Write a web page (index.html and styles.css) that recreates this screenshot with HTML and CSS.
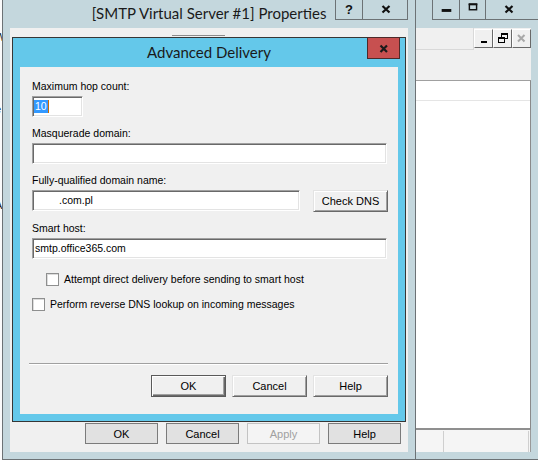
FILE: index.html
```html
<!DOCTYPE html>
<html>
<head>
<meta charset="utf-8">
<title>Advanced Delivery</title>
<link rel="stylesheet" href="styles.css">
</head>
<body>
<div class="desk">
  <div class="bgwin">
    <span class="frag f1">W</span>
    <span class="frag f2">r</span>
    <span class="frag f3">e</span>
    <span class="frag f4">r</span>
    <span class="frag f5">t</span>
    <span class="frag f6">A</span>
  </div>

  <div class="win mmc">
    <div class="titlebar mmc-title">
      <div class="capbtns">
        <span class="cb cb-min">
          <svg width="27" height="19" viewBox="0 0 27 19"><rect x="9" y="9" width="10" height="3" fill="#111"/></svg>
        </span>
        <span class="cb cb-max">
          <svg width="26" height="19" viewBox="0 0 26 19"><rect x="9.75" y="4.25" width="7.5" height="5.5" fill="none" stroke="#111" stroke-width="1.5"/><rect x="9" y="3" width="9" height="2" fill="#111"/></svg>
        </span>
        <span class="cb cb-close">
          <svg width="52" height="19" viewBox="0 0 52 19"><path d="M19.5 6 L26.5 12.5 M26.5 6 L19.5 12.5" stroke="#111" stroke-width="2.2" fill="none"/></svg>
        </span>
      </div>
    </div>
    <div class="client mmc-client">
      <div class="menubar">
        <div class="menu-fill"></div>
        <div class="mdibtns">
          <span class="mdib"><svg width="17" height="17" viewBox="0 0 17 17"><rect x="6" y="11" width="6" height="2" fill="#000"/></svg></span>
          <span class="mdib"><svg width="17" height="17" viewBox="0 0 17 17"><rect x="7.5" y="3.5" width="6" height="5" fill="none" stroke="#000"/><rect x="7" y="3" width="7" height="2" fill="#000"/><rect x="4.5" y="7.5" width="6" height="5" fill="#f0f0f0" stroke="#000"/><rect x="4" y="7" width="7" height="2" fill="#000"/></svg></span>
          <span class="mdib mdib-off"><svg width="17" height="17" viewBox="0 0 17 17"><path d="M5 5 L11.5 11.5 M11.5 5 L5 11.5" stroke="#a8a8a8" stroke-width="2" fill="none"/></svg></span>
        </div>
      </div>
      <div class="toolbar"></div>
      <div class="list">
        <div class="list-head"></div>
      </div>
      <div class="status">
        <span class="st st1"></span>
        <span class="st st2"></span>
      </div>
    </div>
  </div>

  <div class="win props">
    <div class="titlebar props-title">
      <span></span>
      <span class="title-text props-title-text">[SMTP Virtual Server #1] Properties</span>
      <div class="capbtns">
        <span class="cb cb-help">?</span>
        <span class="cb cb-pclose">
          <svg width="44" height="19" viewBox="0 0 44 19"><path d="M19.5 6 L26.5 12.5 M26.5 6 L19.5 12.5" stroke="#111" stroke-width="2.2" fill="none"/></svg>
        </span>
      </div>
    </div>
    <div class="client props-client">
      <div class="tab-edge"></div>
      <div class="pbtnrow">
        <span class="pbtn">OK</span>
        <span class="pbtn">Cancel</span>
        <span class="pbtn pbtn-off">Apply</span>
        <span class="pbtn">Help</span>
      </div>
    </div>
  </div>

  <div class="dlg">
    <div class="titlebar dlg-title">
      <span></span>
      <span class="title-text dlg-title-text">Advanced Delivery</span>
      <div class="capbtns">
        <span class="cb cb-red">
          <svg width="31" height="21" viewBox="0 0 31 21"><path d="M12.5 7.5 L19 14 M19 7.5 L12.5 14" stroke="#1b1b1b" stroke-width="2.2" fill="none"/></svg>
        </span>
      </div>
    </div>
    <div class="dlg-client">
      <div class="field">
        <span class="lbl">Maximum hop count:</span>
        <div class="inp inp-hop"><span class="sel">10</span><span class="caret"></span></div>
      </div>
      <div class="field">
        <span class="lbl">Masquerade domain:</span>
        <div class="inp"></div>
      </div>
      <div class="field">
        <span class="lbl">Fully-qualified domain name:</span>
        <div class="fqdn-row">
          <div class="inp inp-fqdn"><span class="val val-fqdn">.com.pl</span></div>
          <span class="btn btn-dns">Check DNS</span>
        </div>
      </div>
      <div class="field">
        <span class="lbl">Smart host:</span>
        <div class="inp"><span class="val">smtp.office365.com</span></div>
      </div>
      <div class="chk chk1"><span class="box"></span><span>Attempt direct delivery before sending to smart host</span></div>
      <div class="chk chk2"><span class="box"></span><span>Perform reverse DNS lookup on incoming messages</span></div>
      <div class="sep"></div>
      <div class="btnrow">
        <span class="btn btn-def">OK</span>
        <span class="btn">Cancel</span>
        <span class="btn">Help</span>
      </div>
    </div>
  </div>
</div>
</body>
</html>
```

FILE: styles.css
```css
* { box-sizing: border-box; }
html, body { margin: 0; padding: 0; }
body {
  width: 538px;
  height: 460px;
  overflow: hidden;
  background: #ffffff;
  font-family: "Liberation Sans", Arial, sans-serif;
  font-size: 10.5px;
  color: #000;
}
.desk {
  position: relative;
  width: 538px;
  height: 460px;
  overflow: hidden;
  background: #ffffff;
}

/* sliver of a window behind */
.bgwin {
  position: absolute;
  left: 0;
  top: 0;
  width: 3px;
  height: 460px;
  background: #fbfbfb;
  overflow: hidden;
  display: flex;
  flex-direction: column;
}
.frag {
  display: block;
  margin-left: -5px;
  line-height: 11px;
  font-size: 11px;
  color: #222;
}
.f1 { margin-top: 32px; }
.f2 { margin-top: 48px; }
.f3 { margin-top: 2px; }
.f4 { margin-top: 3px; }
.f5 { margin-top: 40px; }
.f6 { margin-top: 20px; }

/* generic window */
.win {
  position: absolute;
  top: -1px;
  height: 461px;
  border: 1px solid #6c7275;
  background: #c4d7dd;
  display: flex;
  flex-direction: column;
}
.props { left: 2px; width: 414px; }
.mmc { left: 400px; width: 139px; }

.titlebar {
  height: 28px;
  flex: none;
  display: grid;
  grid-template-columns: 1fr auto 1fr;
  align-items: start;
}
.mmc-title { display: flex; justify-content: flex-end; }
.capbtns {
  display: flex;
  justify-self: end;
}
.props-title .capbtns { margin-right: 7px; }
.cb {
  height: 20px;
  border: 1px solid #6c7275;
  border-top: 0;
  display: flex;
  align-items: flex-start;
  justify-content: flex-start;
}
.cb + .cb { border-left: 0; }
.cb-min { width: 28px; }
.cb-max { width: 26px; }
.cb-close { width: 52px; border-right: 0; }
.cb-help {
  width: 28px;
  justify-content: center;
  font-family: "Liberation Sans", Arial, sans-serif;
  font-weight: bold;
  font-size: 13px;
  line-height: 19px;
  color: #111;
}
.cb-pclose { width: 45px; }

.title-text {
  white-space: nowrap;
  color: #1a1a1a;
  font-family: Lato, "Open Sans", sans-serif;
}
.props-title-text {
  font-size: 15px;
  line-height: 27px;
}

.client { flex: none; height: 424px; margin: 0 7px; background: #f0f0f0; }

/* properties window body */
.props-client {
  display: flex;
  flex-direction: column;
  padding: 0 7px 8px 0;
}
.tab-edge {
  margin-top: 7px;
  margin-left: 162px;
  width: 53px;
  height: 1px;
  background: #8c8c8c;
}
.pbtnrow {
  margin-top: auto;
  display: flex;
  justify-content: flex-end;
  gap: 8px;
  font-size: 11px;
}
.pbtn {
  width: 73px;
  height: 21px;
  background: #e1e1e1;
  border: 1px solid #7b7b7b;
  display: flex;
  align-items: center;
  justify-content: center;
}
.pbtn-off {
  background: #f4f4f4;
  border-color: #c3c3c3;
  color: #a0a0a0;
}

/* MMC window behind */
.mmc-client {
  display: flex;
  flex-direction: column;
}
.menubar {
  height: 22px;
  flex: none;
  display: flex;
}
.menu-fill {
  flex: 1;
  border-bottom: 1px solid #d9d9d9;
  border-right: 1px solid #d9d9d9;
}
.mdibtns {
  display: flex;
  padding-top: 1px;
  align-items: flex-start;
}
.mdib {
  width: 19px;
  height: 19px;
  border: 1px solid;
  border-color: #ffffff #696969 #696969 #ffffff;
  background: #f0f0f0;
}
.toolbar { height: 30px; flex: none; }
.list {
  flex: 1;
  background: #ffffff;
  border-top: 1px solid #a0a0a0;
  border-right: 1px solid #8a8a8a;
  border-bottom: 2px solid #8f8f8f;
}
.list-head {
  height: 20px;
  border-bottom: 1px solid #e5e5e5;
}
.status {
  height: 22px;
  flex: none;
  display: flex;
  background: #f5f5f5;
  border-right: 1px solid #9a9a9a;
  padding: 1px 1px 0 0;
}
.st { height: 100%; border-right: 1px solid #cfcfcf; }
.st1 { width: 36px; }
.st2 { flex: 1; }

/* Advanced Delivery dialog */
.dlg {
  position: absolute;
  left: 12px;
  top: 37px;
  width: 394px;
  height: 385px;
  border: 1px solid #363636;
  background: #64c8ea;
  display: flex;
  flex-direction: column;
}
.dlg-title { height: 29px; }
.dlg-title .capbtns { margin-right: 5px; margin-top: -1px; }
.cb-red {
  width: 33px;
  height: 22px;
  background: #c75050;
  border: 1px solid #4d2a2a;
}
.dlg-title-text {
  font-size: 15px;
  line-height: 29px;
}
.dlg-client {
  flex: none;
  height: 347px;
  margin: 0 7px;
  background: #f0f0f0;
  padding: 13px 11px 0 12px;
  display: flex;
  flex-direction: column;
}
.field {
  display: flex;
  flex-direction: column;
  gap: 3px;
  margin-bottom: 10px;
}
.field:nth-child(4) { margin-bottom: 0; }
.lbl { line-height: 13px; height: 13px; white-space: nowrap; }
.inp {
  height: 21px;
  width: 100%;
  background: #ffffff;
  border: 1px solid;
  border-color: #a0a0a0 #ffffff #ffffff #a0a0a0;
  box-shadow: inset 1px 1px #696969, inset -1px -1px #e3e3e3;
  display: flex;
  align-items: center;
  padding-left: 2px;
  white-space: nowrap;
  line-height: 13px;
}
.inp-hop { width: 51px; padding-left: 1px; }
.sel {
  background: #3399ff;
  color: #ffffff;
  line-height: 13px;
  padding: 0 1px;
}
.caret {
  width: 1px;
  height: 13px;
  background: #cc6a00;
}
.fqdn-row {
  display: flex;
  align-items: flex-start;
  margin-right: -1px;
}
.inp-fqdn { width: 268px; }
.val-fqdn { padding-left: 24px; }

.btn {
  width: 75px;
  height: 22px;
  background: #f0f0f0;
  border: 1px solid;
  border-color: #e3e3e3 #696969 #696969 #e3e3e3;
  box-shadow: inset 1px 1px #ffffff, inset -1px -1px #a0a0a0;
  display: flex;
  align-items: center;
  justify-content: center;
  white-space: nowrap;
  font-size: 11px;
}
.btn-dns { margin-left: auto; }
.btn-def {
  border: 1px solid #5a5a5a;
  box-shadow: inset 1px 1px #ffffff, inset -1px -1px #696969, inset -2px -2px #a0a0a0;
}

.chk {
  display: flex;
  align-items: center;
  gap: 5px;
  height: 13px;
  line-height: 13px;
  white-space: nowrap;
}
.chk1 { margin-top: 14px; margin-left: 14px; }
.chk2 { margin-top: 12px; }
.box {
  width: 13px;
  height: 13px;
  flex: none;
  background: #ffffff;
  border: 1px solid #8e8f8f;
  box-shadow: inset 1px 1px #dcdcdc;
}
.sep {
  margin-top: 52px;
  margin-left: -3px;
  margin-right: -1px;
  height: 2px;
  border-top: 1px solid #a0a0a0;
  border-bottom: 1px solid #ffffff;
}
.btnrow {
  margin-top: 10px;
  margin-right: -1px;
  display: flex;
  justify-content: flex-end;
  gap: 6px;
}
```
